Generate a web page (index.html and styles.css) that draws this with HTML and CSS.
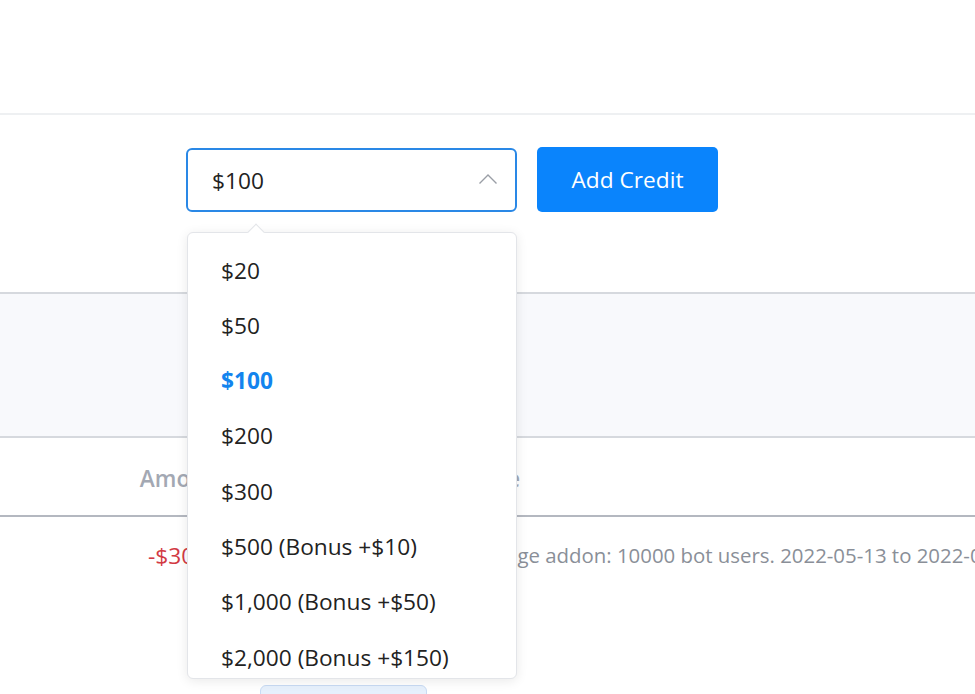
FILE: index.html
```html
<!DOCTYPE html>
<html>
<head>
<meta charset="utf-8">
<link rel="stylesheet" href="styles.css">
</head>
<body>
<div class="topbar"></div>
<div class="credit-row">
  <div class="select-wrap">
    <div class="select">
      <span class="select-value">$100</span>
      <svg class="chevron" width="20" height="12" viewBox="0 0 20 12"><path d="M1.5 10.5 L10 2 L18.5 10.5" fill="none" stroke="#9a9ea6" stroke-width="1.4"/></svg>
    </div>
    <div class="dropdown">
      <div class="notch"></div>
      <ul class="options">
        <li>$20</li>
        <li>$50</li>
        <li class="active">$100</li>
        <li>$200</li>
        <li>$300</li>
        <li>$500 (Bonus +$10)</li>
        <li>$1,000 (Bonus +$50)</li>
        <li>$2,000 (Bonus +$150)</li>
      </ul>
    </div>
  </div>
  <button class="add-btn">Add Credit</button>
</div>
<div class="summary"></div>
<div class="table">
  <div class="thead">
    <div class="col-amount">Amount</div>
    <div class="col-type">Type</div>
  </div>
  <div class="trow">
    <div class="col-amount neg">-$30.00</div>
    <div class="col-desc">Storage addon: 10000 bot users. 2022-05-13 to 2022-06-13</div>
  </div>
  <div class="more-row"><div class="more-btn"></div></div>
</div>
</body>
</html>
```
FILE: styles.css
```css
* { box-sizing: border-box; }
html, body { margin: 0; padding: 0; }
body {
  font-family: "Open Sans", "Liberation Sans", sans-serif;
  font-size: 22.7px;
  color: #222;
  background: #fff;
  width: 975px;
  height: 694px;
  overflow: hidden;
}
.topbar {
  height: 115px;
  border-bottom: 2px solid #eef0f2;
}
.credit-row {
  display: flex;
  align-items: center;
  gap: 20px;
  padding-left: 186px;
  margin-top: 32px;
  height: 65px;
}
.select-wrap { position: relative; }
.select {
  width: 331px;
  height: 64px;
  border: 2px solid #2a88e6;
  border-radius: 6px;
  display: flex;
  align-items: center;
  justify-content: space-between;
  padding: 0 17px 0 24px;
}
.select-value { color: #222; padding-top: 1px; }
.chevron { display: block; margin-top: -2px; }
.add-btn {
  width: 181px;
  height: 65px;
  border: none;
  border-radius: 5px;
  background: #0a84fc;
  color: #fff;
  font-family: inherit;
  font-size: 22.7px;
  padding: 0;
}
.dropdown {
  position: absolute;
  top: 84px;
  left: 1px;
  width: 330px;
  height: 447px;
  background: #fff;
  border: 1px solid #e3e5e9;
  border-radius: 6px;
  box-shadow: 0 2px 12px rgba(0, 0, 0, 0.09);
  z-index: 10;
}
.notch {
  position: absolute;
  top: -7px;
  left: 62px;
  width: 12px;
  height: 12px;
  background: #fff;
  border-left: 1px solid #e3e5e9;
  border-top: 1px solid #e3e5e9;
  transform: rotate(45deg);
}
.options {
  list-style: none;
  margin: 0;
  padding: 10px 0 0;
  height: 445px;
  overflow: hidden;
  border-radius: 6px;
}
.options li {
  height: 55.3px;
  line-height: 55.3px;
  padding-left: 33px;
  color: #222;
  white-space: nowrap;
}
.options li.active {
  color: #1384ee;
  font-weight: 700;
}
.summary {
  margin-top: 80px;
  height: 146px;
  background: #f8f9fc;
  border-top: 2px solid #d6d9de;
  border-bottom: 2px solid #d6d9de;
}
.thead, .trow {
  display: flex;
  align-items: center;
  overflow: hidden;
}
.thead {
  height: 79px;
  border-bottom: 2px solid #b4b8c0;
  color: #a3a8b3;
  font-weight: 600;
  padding-top: 4px;
}
.trow {
  height: 76px;
}
.col-amount {
  flex: 0 0 368px;
  text-align: center;
  white-space: nowrap;
}
.col-type {
  padding-left: 100px;
  white-space: nowrap;
}
.col-desc {
  padding-left: 99px;
  white-space: nowrap;
  color: #8a8f98;
  font-size: 20.4px;
}
.neg { color: #d23a44; padding-left: 6px; }
.more-row {
  padding-left: 260px;
  padding-top: 92px;
}
.more-btn {
  width: 167px;
  height: 40px;
  background: #e6f0fc;
  border: 1px solid #c8dbf4;
  border-radius: 6px;
}
```
